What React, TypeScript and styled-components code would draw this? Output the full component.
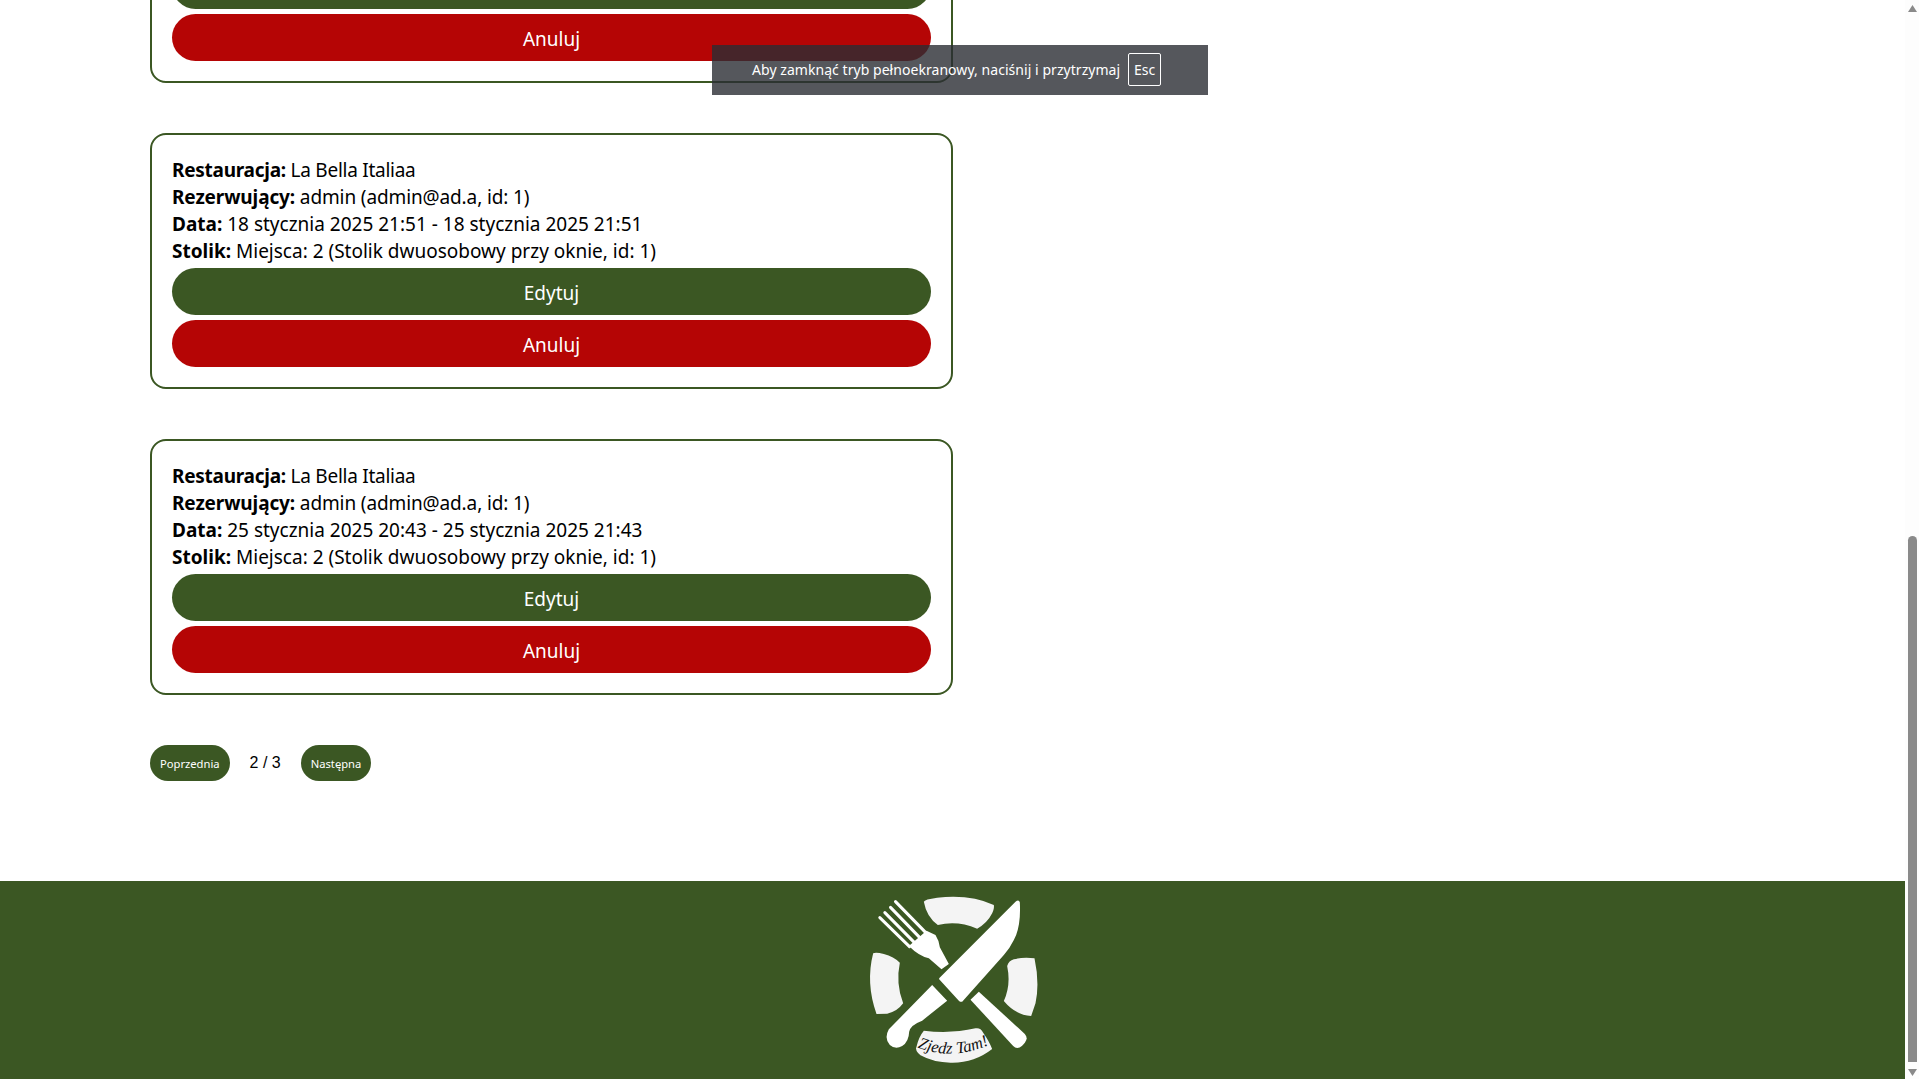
import React from "react";
import styled, { createGlobalStyle } from "styled-components";

const GREEN = "#3b5723";
const RED = "#b50505";
const TEXT_FONT = `"Noto Sans", "Open Sans", "Liberation Sans", sans-serif`;

const Global = createGlobalStyle`
  html, body { margin: 0; padding: 0; height: 100%; overflow: hidden; background: #fff; }
  #root { height: 100%; }
`;

const Page = styled.div`
  position: relative;
  display: flex;
  height: 1079px;
  overflow: hidden;
`;

const Main = styled.main`
  flex: 1;
  min-width: 0;
  display: flex;
  flex-direction: column;
`;

const Content = styled.section`
  flex: 1;
  min-height: 0;
  display: flex;
  flex-direction: column;
  align-items: flex-start;
  padding-left: 150px;
`;

const Card = styled.article<{ $clipped?: boolean }>`
  box-sizing: border-box;
  width: 803px;
  height: 256px;
  flex: none;
  margin-top: ${(p) => (p.$clipped ? "-173px" : "0")};
  margin-bottom: 50px;
  padding: ${(p) => (p.$clipped ? "130px" : "22px")} 20px 0;
  border: 2px solid ${GREEN};
  border-radius: 16px;
  background: #fff;
  font: 400 19px/27px ${TEXT_FONT};
  color: #000;
`;

const Line = styled.div<{ $spacing?: number }>`
  white-space: nowrap;
  letter-spacing: ${(p) => p.$spacing ?? 0}px;
  strong { font-weight: 700; }
`;

const Action = styled.button<{ $color: string }>`
  display: block;
  box-sizing: border-box;
  width: 759px;
  height: 47px;
  margin-top: ${(p) => (p.$color === RED ? "5px" : "3px")};
  border: 0;
  border-radius: 24px;
  background: ${(p) => p.$color};
  color: #fff;
  font: 400 19px/27px ${TEXT_FONT};
  text-align: center;
  padding: 4px 0 0;
`;

const Pager = styled.nav`
  display: flex;
  align-items: center;
  height: 36px;
`;

const PageButton = styled.button`
  height: 36px;
  border: 0;
  border-radius: 18px;
  padding: 2px 10px 0;
  background: ${GREEN};
  color: #fff;
  font: 400 11.2px/16px ${TEXT_FONT};
`;

const PageCount = styled.span`
  margin: 0 20px;
  font: 400 16px/18px "Liberation Sans", Arial, sans-serif;
  color: #000;
`;

const Footer = styled.footer`
  flex: none;
  height: 198px;
  background: ${GREEN};
  display: flex;
  justify-content: center;
  overflow: hidden;
`;

const ScrollBar = styled.aside`
  flex: none;
  box-sizing: border-box;
  width: 14px;
  padding-left: 1px;
  display: flex;
  flex-direction: column;
  align-items: center;
  background: #fdfdfd;
`;

const Arrow = styled.svg<{ $down?: boolean }>`
  flex: none;
  width: 9px;
  height: 7px;
  margin: ${(p) => (p.$down ? "7px 0 3px" : "5px 0 0")};
  fill: #8a8a8a;
`;

const Track = styled.div`
  flex: 1;
  width: 100%;
  display: flex;
  flex-direction: column;
  justify-content: flex-end;
  align-items: center;
`;

const Thumb = styled.div`
  width: 9px;
  height: 526px;
  border-radius: 5px 5px 0 0;
  background: #8a8a8a;
`;

const Toast = styled.div`
  position: absolute;
  left: 712px;
  top: 45px;
  width: 496px;
  height: 50px;
  box-sizing: border-box;
  padding: 0 0 1px 40px;
  display: flex;
  align-items: center;
  gap: 8px;
  background: rgba(42, 45, 51, 0.8);
  color: #fff;
  font: 400 14px/20px ${TEXT_FONT};
  letter-spacing: 0.05px;
  white-space: nowrap;
`;

const Key = styled.span`
  box-sizing: border-box;
  width: 33px;
  height: 33px;
  display: flex;
  align-items: center;
  justify-content: center;
  border: 1px solid #fff;
  border-radius: 2px;
`;

const bookings = [
  "18 stycznia 2025 21:51 - 18 stycznia 2025 21:51",
  "25 stycznia 2025 20:43 - 25 stycznia 2025 21:43",
];

const Logo = () => (
  <svg width="220" height="198" viewBox="7.5 33 660 594" aria-label="Zjedz Tam!">
    <g fill="#f4f4f4">
      <path d="M250 95 Q252 88 290 83 Q390 72 460 105 Q462 115 455 130 Q440 160 410 176 Q350 150 292 165 Q258 140 250 95Z" />
      <path d="M98 250 Q105 245 130 252 Q160 260 178 278 Q165 340 188 400 Q170 425 140 431 L108 432 Q75 340 98 250Z" />
      <path d="M500 288 Q505 272 520 268 Q550 260 582 265 Q598 340 585 400 L572 438 Q525 435 490 393 Q512 345 500 288Z" />
      <path d="M250 482 Q330 492 405 475 Q420 472 428 488 Q447 515 455 537 Q400 580 330 578 Q280 578 240 556 Q222 540 228 530 Q235 500 250 482Z" />
    </g>
    <g fill="#fff">
      <path d="M296 325 L525 95 Q535 87 538 97 Q542 170 520 210 Q508 235 490 255 L365 395 Q360 397 355 392 L296 328Z" />
      <path d="M275 345 L320 392 L245 452 Q210 465 206 485 Q205 515 185 528 Q165 540 148 525 Q130 505 145 478Z" />
      <path d="M415 365 L390 389 L518 528 Q530 540 545 527 L553 518 Q564 505 553 492Z" />
      <path d="M258 182 L285 195 Q295 210 298 232 L325 282 L303 298 L265 265 Q235 258 205 228Z" />
    </g>
    <g stroke="#fff" strokeWidth="9" strokeLinecap="round">
      <line x1="165" y1="95" x2="258" y2="190" />
      <line x1="150" y1="112" x2="240" y2="205" />
      <line x1="133" y1="128" x2="222" y2="218" />
      <line x1="118" y1="143" x2="207" y2="230" />
    </g>
    <path id="logo-curve" d="M230 532 Q340 575 455 520" fill="none" />
    <text fontFamily='"Liberation Serif", serif' fontStyle="italic" fontSize="50" fill="#111">
      <textPath href="#logo-curve">Zjedz Tam!</textPath>
    </text>
  </svg>
);

const CardLines = ({ date }: { date: string }) => (
  <>
    <Line $spacing={-0.26}><strong>Restauracja:</strong> La Bella Italiaa</Line>
    <Line $spacing={-0.12}><strong>Rezerwujący:</strong> admin (admin@ad.a, id: 1)</Line>
    <Line><strong>Data:</strong> {date}</Line>
    <Line><strong>Stolik:</strong> Miejsca: 2 (Stolik dwuosobowy przy oknie, id: 1)</Line>
  </>
);

const App = () => (
  <>
    <Global />
    <Page>
      <Main>
        <Content>
          <Card $clipped>
            <Action $color={GREEN} aria-label="Edytuj" />
            <Action $color={RED}>Anuluj</Action>
          </Card>
          {bookings.map((date) => (
            <Card key={date}>
              <CardLines date={date} />
              <Action $color={GREEN}>Edytuj</Action>
              <Action $color={RED}>Anuluj</Action>
            </Card>
          ))}
          <Pager>
            <PageButton>Poprzednia</PageButton>
            <PageCount>2 / 3</PageCount>
            <PageButton>Następna</PageButton>
          </Pager>
        </Content>
        <Footer><Logo /></Footer>
      </Main>
      <ScrollBar>
        <Arrow viewBox="0 0 9 7"><path d="M4.5 0 L9 7 H0Z" /></Arrow>
        <Track><Thumb /></Track>
        <Arrow $down viewBox="0 0 9 7"><path d="M0 0 H9 L4.5 7Z" /></Arrow>
      </ScrollBar>
      <Toast>
        Aby zamknąć tryb pełnoekranowy, naciśnij i przytrzymaj
        <Key>Esc</Key>
      </Toast>
    </Page>
  </>
);

export default App;
